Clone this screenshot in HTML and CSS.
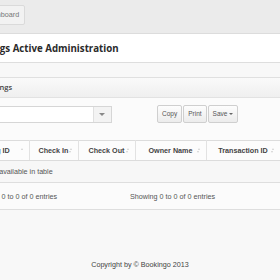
FILE: index.html
```html
<!DOCTYPE html>
<html>
<head>
<meta charset="utf-8">
<link rel="stylesheet" href="styles.css">
</head>
<body>
<div class="page">
  <div class="topbar">
    <span class="crumb">Dashboard</span>
  </div>
  <div class="titlebar">
    <h1 class="title">Bookings Active Administration</h1>
  </div>
  <div class="content">
    <div class="box">
      <div class="box-head">Bookings</div>
      <div class="box-body">
        <div class="toolbar">
          <div class="select"><span class="select-arrow"></span></div>
          <div class="btns">
            <span class="btn">Copy</span>
            <span class="btn">Print</span>
            <span class="btn">Save <i class="caret"></i></span>
          </div>
        </div>
        <table class="grid">
          <colgroup>
            <col class="c1"><col class="c2"><col class="c3"><col class="c4"><col class="c5">
          </colgroup>
          <thead>
            <tr>
              <th>Booking ID <i class="sort sort-up"></i></th>
              <th>Check In <i class="sort"></i></th>
              <th>Check Out <i class="sort"></i></th>
              <th>Owner Name <i class="sort"></i></th>
              <th>Transaction ID <i class="sort"></i></th>
            </tr>
          </thead>
          <tbody>
            <tr><td colspan="5">No data available in table</td></tr>
          </tbody>
        </table>
        <div class="info">
          <span class="info-l">Showing 0 to 0 of 0 entries</span>
          <span class="info-r">Showing 0 to 0 of 0 entries</span>
        </div>
      </div>
    </div>
    <div class="copyright">Copyright by © Bookingo 2013</div>
  </div>
</div>
</body>
</html>
```

FILE: styles.css
```css
html, body {
  margin: 0;
  padding: 0;
  background: #f8f8f8;
  overflow: hidden;
}
body {
  font-family: "Liberation Sans", Arial, sans-serif;
  font-size: 7.2px;
  color: #555;
  width: 280px;
  height: 280px;
}
.page {
  margin-left: -100px;
  width: 420px;
}
.topbar {
  height: 34px;
  background: #ebebeb;
  border-bottom: 1px solid #dcdcdc;
  padding-top: 5px;
  box-sizing: border-box;
}
.crumb {
  display: inline-block;
  margin-left: 78px;
  height: 20px;
  line-height: 18px;
  padding: 0 5px;
  box-sizing: border-box;
  background: #f2f2f2;
  border: 1px solid #dadada;
  border-radius: 2px;
  color: #777;
}
.titlebar {
  background: #fff;
  border-bottom: 1px solid #dedede;
  height: 28px;
  display: flex;
  align-items: center;
}
.title {
  margin: 0 0 0 66px;
  font-family: "Open Sans", sans-serif;
  font-weight: 700;
  font-size: 9.7px;
  color: #2a2a2a;
}
.content {
  padding-top: 14px;
}
.box {
  margin-left: 60px;
  border-top: 1px solid #e0e0e0;
}
.box-head {
  height: 19px;
  line-height: 19px;
  padding-left: 19px;
  font-family: "Open Sans", sans-serif;
  font-weight: 600;
  font-size: 7.5px;
  color: #444;
  background: linear-gradient(#fafafa, #efefef);
  border-bottom: 1px solid #e2e2e2;
}
.box-body {
  background: #fbfbfb;
  padding-top: 7px;
}
.toolbar {
  display: flex;
  align-items: center;
  height: 18px;
}
.select {
  width: 152px;
  height: 17px;
  box-sizing: border-box;
  border: 1px solid #d6d6d6;
  background: #fff;
  display: flex;
  justify-content: flex-end;
}
.select-arrow {
  width: 17px;
  border-left: 1px solid #e0e0e0;
  background: #f3f3f3;
  position: relative;
}
.select-arrow::after {
  content: "";
  position: absolute;
  left: 5px;
  top: 6px;
  border-left: 3px solid transparent;
  border-right: 3px solid transparent;
  border-top: 3px solid #888;
}
.btns {
  margin-left: 45px;
  display: flex;
  gap: 1px;
}
.btn {
  display: inline-block;
  height: 18px;
  line-height: 16px;
  box-sizing: border-box;
  padding: 0 4px;
  border: 1px solid #cfcfcf;
  border-radius: 2px;
  background: linear-gradient(#fdfdfd, #ececec);
  color: #555;
  font-size: 6.5px;
}
.caret {
  display: inline-block;
  vertical-align: middle;
  border-left: 2px solid transparent;
  border-right: 2px solid transparent;
  border-top: 2px solid #666;
}
.grid {
  margin-top: 17px;
  margin-left: -7px;
  border-collapse: collapse;
  table-layout: fixed;
  width: 327px;
}
.c1 { width: 76px; }
.c2 { width: 49px; }
.c3 { width: 57px; }
.c4 { width: 71px; }
.c5 { width: 74px; }
.grid th {
  position: relative;
  height: 20px;
  box-sizing: border-box;
  padding: 0;
  text-align: center;
  font-weight: bold;
  color: #444;
  background: #fcfcfc;
  border-top: 1px solid #dcdcdc;
  border-bottom: 1px solid #dcdcdc;
  border-right: 1px solid #e2e2e2;
  white-space: nowrap;
}
.sort {
  position: absolute;
  right: 6px;
  top: 7px;
  width: 0;
  height: 0;
  border-left: 1.5px solid transparent;
  border-right: 1.5px solid transparent;
  border-bottom: 2px solid #d0d0d0;
}
.sort::after {
  content: "";
  position: absolute;
  left: -1.5px;
  top: 3px;
  border-left: 1.5px solid transparent;
  border-right: 1.5px solid transparent;
  border-top: 2px solid #d0d0d0;
}
.sort-up::after {
  display: none;
}
.grid td {
  height: 22px;
  box-sizing: border-box;
  padding: 0 0 0 19px;
  color: #555;
  border-bottom: 1px solid #dedede;
  background: #f7f7f7;
}
.info {
  display: flex;
  height: 27px;
  box-sizing: border-box;
  align-items: center;
  border-bottom: 1px solid #dedede;
  margin-left: -60px;
}
.info-l {
  margin-left: 72px;
  width: 158px;
}
.copyright {
  text-align: center;
  margin-top: 50px;
  margin-left: 100px;
  width: 280px;
  color: #444;
}
```
